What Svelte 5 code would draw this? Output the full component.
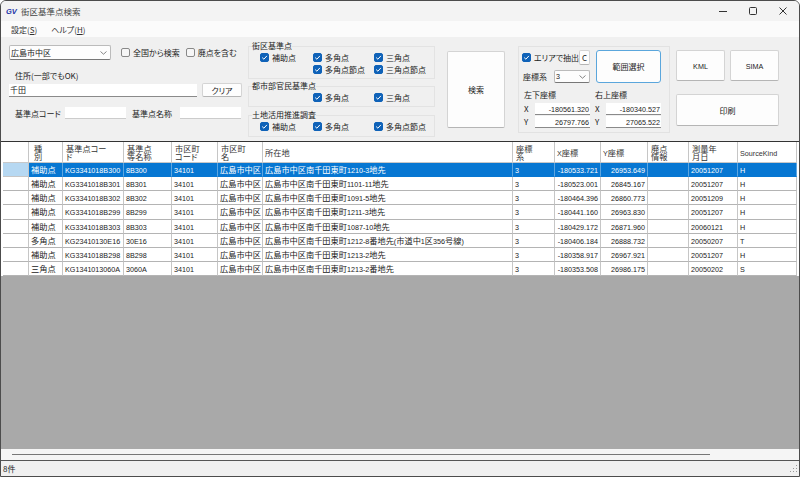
<script>
  const cols = ['種別','基準点コード','基準点等名称','市区町コード','市区町名','所在地','座標系','X座標','Y座標','廃点情報','測量年月日','SourceKind'];
  const rows = [
    ['補助点','KG3341018B300','8B300','34101','広島市中区','広島市中区南千田東町1210-3地先','3','-180533.721','26953.649','','20051207','H'],
    ['補助点','KG3341018B301','8B301','34101','広島市中区','広島市中区南千田東町1101-11地先','3','-180523.001','26845.167','','20051207','H'],
    ['補助点','KG3341018B302','8B302','34101','広島市中区','広島市中区南千田東町1091-5地先','3','-180464.396','26860.773','','20051209','H'],
    ['補助点','KG3341018B299','8B299','34101','広島市中区','広島市中区南千田東町1211-3地先','3','-180441.160','26963.830','','20051207','H'],
    ['補助点','KG3341018B303','8B303','34101','広島市中区','広島市中区南千田東町1087-10地先','3','-180429.172','26871.960','','20060121','H'],
    ['多角点','KG23410130E16','30E16','34101','広島市中区','広島市中区南千田東町1212-8番地先(市道中1区356号線)','3','-180406.184','26888.732','','20050207','T'],
    ['補助点','KG3341018B298','8B298','34101','広島市中区','広島市中区南千田東町1213-2地先','3','-180358.917','26967.921','','20051207','H'],
    ['三角点','KG1341013060A','3060A','34101','広島市中区','広島市中区南千田東町1213-2番地先','3','-180353.508','26986.175','','20050202','S']
  ];
  const headWrap = { 0: ['種','別'], 1: ['基準点コー','ド'], 2: ['基準点','等名称'], 3: ['市区町','コード'], 4: ['市区町','名'], 6: ['座標','系'], 9: ['廃点','情報'], 10: ['測量年','月日'] };
  const groups = [
    { title: '街区基準点', cls: 'tall', items: [['補助点',1,1],['多角点',2,1],['三角点',3,1],['多角点節点',2,2],['三角点節点',3,2]] },
    { title: '都市部官民基準点', cls: 'mid', items: [['多角点',2,1],['三角点',3,1]] },
    { title: '土地活用推進調査', cls: 'low', items: [['補助点',1,1],['多角点',2,1],['多角点節点',3,1]] }
  ];
  const parts = (s) => s.split(/([\x20-\x7e]+)/).filter(Boolean);
  const isLat = (s) => /^[\x20-\x7e]+$/.test(s);
</script>

{#snippet check(on)}
  <span class="box" class:on>
    {#if on}<svg viewBox="0 0 9 9" width="9" height="9"><path d="M2.2 4.6 3.9 6.2 6.9 2.9" fill="none" stroke="#fff" stroke-width="1"/></svg>{/if}
  </span>
{/snippet}

{#snippet chev()}
  <svg class="chev" viewBox="0 0 7 4" width="7" height="4"><path d="M.5.5 3.5 3.2 6.5.5" fill="none" stroke="#666" stroke-width=".8"/></svg>
{/snippet}

{#snippet mixed(text)}
  {#each parts(text) as p}{#if isLat(p)}<span class="lat">{p}</span>{:else}{p}{/if}{/each}
{/snippet}

<div class="win">
  <header class="title">
    <span class="logo">GV</span>
    <span class="ttl">街区基準点検索</span>
    <span class="ctrls">
      <svg viewBox="0 0 10 10" width="10" height="10"><path d="M1 5.5h8" stroke="#333" fill="none"/></svg>
      <svg viewBox="0 0 10 10" width="10" height="10"><rect x="1.5" y="1.5" width="7" height="7" rx="1" stroke="#333" fill="none"/></svg>
      <svg viewBox="0 0 10 10" width="10" height="10"><path d="M1.5 1.5l7 7M8.5 1.5l-7 7" stroke="#333" fill="none"/></svg>
    </span>
  </header>
  <nav class="menu"><span>設定(<u>S</u>)</span><span>ヘルプ(<u>H</u>)</span></nav>

  <section class="tools">
    <div class="col1">
      <div class="r1">
        <div class="combo city"><span>広島市中区</span>{@render chev()}</div>
        <label class="chk c1">{@render check(false)}全国から検索</label>
        <label class="chk c2">{@render check(false)}廃点を含む</label>
      </div>
      <div class="addr-label">住所(一部でもOK)</div>
      <div class="r2">
        <div class="input addr">千田</div>
        <button class="btn clear">クリア</button>
      </div>
      <div class="r3">
        <span class="l1">基準点コード</span>
        <div class="input code"></div>
        <span class="l2">基準点名称</span>
        <div class="input code"></div>
      </div>
    </div>

    <div class="col2">
      {#each groups as g}
        <fieldset class="grp {g.cls}">
          <legend>{g.title}</legend>
          <div class="grid">
            {#each g.items as [t, c, r]}
              <label class="chk" style="grid-column:{c};grid-row:{r}">{@render check(true)}{t}</label>
            {/each}
          </div>
        </fieldset>
      {/each}
    </div>

    <button class="btn search">検索</button>

    <div class="area">
      <div class="a-top">
        <div class="a-left">
          <div class="a-r1">
            <label class="chk">{@render check(true)}エリアで抽出</label>
            <button class="btn cbtn">C</button>
          </div>
          <div class="a-r2">
            <span>座標系</span>
            <div class="combo sys"><span class="lat">3</span>{@render chev()}</div>
          </div>
        </div>
        <button class="btn range">範囲選択</button>
      </div>
      <div class="coords">
        <div class="cset">
          <div class="chead">左下座標</div>
          <div class="crow"><span>X</span><div class="input num"><span class="lat">-180561.320</span></div></div>
          <div class="crow"><span>Y</span><div class="input num"><span class="lat">26797.766</span></div></div>
        </div>
        <div class="cset">
          <div class="chead">右上座標</div>
          <div class="crow"><span>X</span><div class="input num"><span class="lat">-180340.527</span></div></div>
          <div class="crow"><span>Y</span><div class="input num"><span class="lat">27065.522</span></div></div>
        </div>
      </div>
    </div>

    <div class="col5">
      <div class="pair"><button class="btn kml"><span class="lat">KML</span></button><button class="btn kml"><span class="lat">SIMA</span></button></div>
      <button class="btn print">印刷</button>
    </div>
  </section>

  <section class="table">
    <div class="trow head">
      <div class="cell rh"></div>
      {#each cols as c, i}
        <div class="cell">
          {#if headWrap[i]}<div class="wrap">{headWrap[i][0]}<br />{headWrap[i][1]}</div>{:else}<span>{@render mixed(c)}</span>{/if}
        </div>
      {/each}
    </div>
    {#each rows as r, ri}
      <div class="trow data" class:sel={ri === 0}>
        <div class="cell rh"></div>
        {#each r as v, i}
          <div class="cell" class:right={i === 7 || i === 8}>{@render mixed(v)}</div>
        {/each}
      </div>
    {/each}
    <div class="empty"></div>
    <div class="hscroll"><div class="thumb"></div></div>
  </section>

  <footer class="status">
    <span>8件</span>
    <svg viewBox="0 0 9 9" width="9" height="9"><g fill="#999"><rect x="7" y="1" width="1" height="1"/><rect x="7" y="4" width="1" height="1"/><rect x="4" y="4" width="1" height="1"/><rect x="7" y="7" width="1" height="1"/><rect x="4" y="7" width="1" height="1"/><rect x="1" y="7" width="1" height="1"/></g></svg>
  </footer>
</div>

<style>
  :global(body) { margin: 0; background: #fff; }
  .win {
    width: 800px; height: 477px; box-sizing: border-box;
    border: 1px solid #4c4c4c; border-radius: 6px 6px 0 0;
    overflow: hidden; display: flex; flex-direction: column;
    font: 8px "Noto Sans CJK JP", "Noto Sans", sans-serif; color: #222;
    font-feature-settings: "palt";
    background: #f0f0f0;
  }
  .lat { font-family: "Liberation Sans", sans-serif; font-size: 7.2px; }
  .title { height: 20px; flex: none; display: flex; align-items: center; background: #f3f3f3; padding-left: 5px; }
  .logo { width: 15px; font: italic bold 7.5px "Liberation Sans", sans-serif; color: #2233a8; }
  .ttl { font-size: 8.5px; color: #444; }
  .ctrls { margin-left: auto; display: flex; gap: 20px; padding-right: 11px; }
  .menu { height: 16px; flex: none; display: flex; align-items: center; gap: 14px; padding-left: 10px; background: #fbfbfb; color: #333; }
  .tools { height: 103px; flex: none; display: flex; align-items: flex-start; padding-left: 8px; background: #f0f0f0; box-sizing: border-box; }

  .col1 { width: 233px; padding-top: 8px; flex: none; }
  .r1 { display: flex; align-items: center; height: 15px; }
  .combo { display: flex; align-items: center; justify-content: space-between; box-sizing: border-box; background: #fdfdfd; border: 1px solid #bbb; border-bottom-color: #777; border-radius: 2px; padding: 0 3px 0 1px; }
  .city { width: 102px; height: 15px; }
  .chk { display: inline-flex; align-items: center; gap: 3px; white-space: nowrap; }
  .box { width: 9px; height: 9px; flex: none; border-radius: 2px; box-sizing: border-box; border: 1px solid #888; background: #f6f6f6; display: block; }
  .box.on { background: #0f62b8; border-color: #0f62b8; }
  .box svg { display: block; margin: -1px; }
  .c1 { margin-left: 10px; }
  .c2 { margin-left: 6px; }
  .addr-label { margin: 9px 0 1px 6px; height: 13px; line-height: 13px; }
  .r2 { display: flex; align-items: center; gap: 5px; }
  .input { box-sizing: border-box; background: #fff; border-bottom: 1px solid #8a8a8a; line-height: 11px; }
  .addr { width: 188px; height: 13px; padding-left: 1px; }
  .clear { width: 40px; height: 14px; }
  .r3 { display: flex; align-items: center; margin-top: 10px; }
  .l1 { margin-left: 6px; width: 50px; }
  .l2 { margin-left: 6px; width: 48px; }
  .code { width: 61px; height: 12px; border-bottom-color: #ccc; }

  .btn { box-sizing: border-box; background: #fdfdfd; border: 1px solid #d4d4d4; border-bottom-color: #b5b5b5; border-radius: 2px; padding: 0; font: inherit; font-feature-settings: inherit; color: #222; }

  .col2 { width: 187px; margin-left: 6px; padding-top: 4px; flex: none; display: flex; flex-direction: column; }
  .grp { margin: 0; padding: 0 0 0 11px; border: 1px solid #e3e3e3; box-sizing: border-box; height: 27px; min-width: 0; }
  .grp.tall { height: 38px; }
  .grp.mid { height: 26px; margin-top: 2px; }
  .grp.low { margin-top: 3px; }
  .grp legend { padding: 0; margin-left: -8px; line-height: 10px; height: 10px; }
  .grid { display: grid; grid-template-columns: 53px 61px auto; grid-auto-rows: 12px; align-items: center; }

  .search { width: 58px; height: 77px; margin: 14px 0 0 12px; flex: none; }

  .area { width: 152px; height: 87px; margin: 9px 0 0 13px; flex: none; box-sizing: border-box; border: 1px solid #e2e2e2; padding: 3px 0 0 3px; }
  .a-top { display: flex; }
  .a-left { width: 74px; }
  .a-r1 { display: flex; align-items: center; justify-content: space-between; height: 15px; padding-right: 6px; }
  .cbtn { width: 13px; height: 15px; }
  .a-r2 { display: flex; align-items: center; justify-content: space-between; margin-top: 5px; padding: 0 6px 0 1px; height: 13px; }
  .sys { width: 36px; height: 13px; }
  .range { width: 65px; height: 33px; border: 1px solid #5aa6dc; border-radius: 3px; }
  .coords { display: flex; gap: 5px; margin-top: 6px; padding-left: 2px; }
  .cset { width: 66px; }
  .chead { height: 13px; line-height: 11px; }
  .crow { display: flex; align-items: center; justify-content: space-between; height: 13px; }
  .num { width: 55px; height: 12px; text-align: right; padding-right: 1px; }

  .col5 { width: 103px; margin: 13px 0 0 6px; flex: none; }
  .pair { display: flex; justify-content: space-between; }
  .kml { width: 49px; height: 31px; }
  .print { width: 103px; height: 32px; margin-top: 13px; }

  .table { flex: 1; display: flex; flex-direction: column; border-top: 1px solid #333; margin-top: 1px; min-height: 0; }
  .trow {
    display: grid; flex: none; background: #fff; padding-left: 2px;
    grid-template-columns: 26px 34px 61px 48px 46px 45px 250px 42px 46px 47px 41px 49px 59px 1fr;
    font-size: 8.2px;
  }
  .head { height: 21px; }
  .data { height: 14.125px; line-height: 13px; }
  .cell { box-sizing: border-box; border-right: 1px solid #c6c6c6; border-bottom: 1px solid #b4b4b4; padding-left: 2px; white-space: nowrap; overflow: hidden; }
  .head .cell { display: flex; align-items: center; padding-left: 2px; color: #333; border-bottom-color: #c8c8c8; }
  .head .cell .wrap { line-height: 8px; padding-left: 1px; }
  .head .cell:nth-child(2) .wrap { padding-left: 3px; }
  .right { text-align: right; padding-right: 2px; }
  .sel .cell { background: #0777d2; color: #fff; border-right-color: #5ea6e0; border-bottom-color: #0777d2; }
  .sel .cell.rh { background: #b6d8f2; border-right-color: #c6c6c6; border-bottom-color: #c6c6c6; }
  .empty { flex: 1; background: #a9a9a9; }
  .hscroll { height: 11px; flex: none; background: #f5f5f5; border-bottom: 1px solid #555; display: flex; align-items: center; padding-left: 11px; }
  .thumb { width: 698px; height: 1.5px; background: #777; }
  .status { height: 15px; flex: none; display: flex; align-items: center; justify-content: space-between; padding: 0 1px 0 2px; background: #f0f0f0; }
</style>
